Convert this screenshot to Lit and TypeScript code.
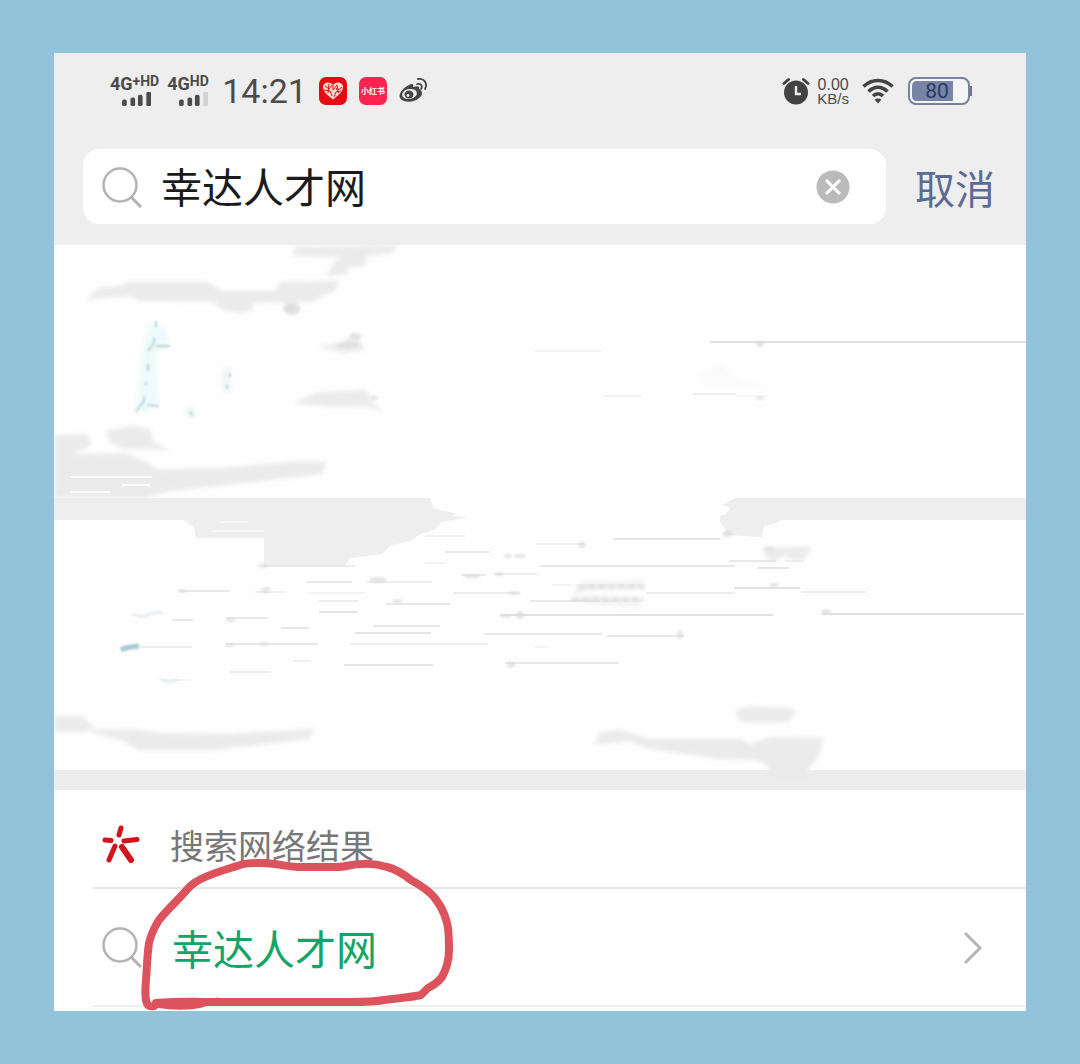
import { LitElement, html, svg, css } from "lit";
import { customElement, property, state } from "lit/decorators.js";

/** Thin streaks left in the erased area: x start, y, x end, opacity. */
const STREAKS: [number, number, number, number][] = [
  [534, 351, 602, 0.3], [604, 396, 642, 0.35], [693, 394, 736, 0.5], [736, 396, 768, 0.2],
  [179, 591, 230, 0.8], [255, 592, 285, 0.5], [306, 582, 352, 0.8], [308, 593, 366, 0.3],
  [318, 601, 358, 0.6], [319, 612, 357, 0.9], [366, 582, 432, 0.6], [386, 604, 450, 0.8],
  [172, 620, 193, 0.7], [226, 618, 268, 0.8], [281, 628, 309, 0.8], [373, 626, 440, 0.8],
  [355, 633, 431, 0.9], [226, 644, 318, 0.8], [350, 644, 488, 0.6], [140, 647, 192, 0.6],
  [293, 661, 311, 0.5], [344, 665, 433, 0.9], [229, 672, 269, 0.6], [162, 680, 191, 0.3],
  [425, 536, 465, 0.4], [445, 552, 490, 0.6], [425, 563, 445, 0.4], [536, 544, 584, 0.5],
  [613, 539, 720, 0.8], [540, 566, 735, 0.8], [462, 575, 486, 0.7], [494, 574, 537, 0.6],
  [453, 593, 520, 0.6], [552, 585, 570, 0.4], [530, 601, 600, 0.7], [646, 593, 735, 0.6],
  [500, 615, 773, 1], [484, 634, 602, 0.7], [607, 636, 684, 0.7], [534, 647, 548, 0.3],
  [505, 663, 618, 0.8], [729, 561, 776, 0.7], [757, 568, 789, 0.8], [734, 588, 800, 1],
  [802, 592, 866, 0.6], [785, 561, 804, 0.5], [264, 566, 355, 0.6],
];

/** Soft specks where streaks began: x, y, x radius, y radius. */
const SPECKS: [number, number, number, number][] = [
  [760, 344, 4, 3], [760, 398, 4, 2], [182, 591, 4, 2], [266, 590, 5, 3], [378, 580, 9, 3],
  [397, 601, 5, 2], [231, 620, 5, 2], [230, 645, 5, 2], [264, 644, 4, 2], [472, 576, 9, 2],
  [499, 574, 4, 2], [508, 556, 4, 2], [520, 556, 6, 2], [582, 545, 4, 3], [514, 593, 6, 2],
  [506, 616, 5, 2], [520, 615, 4, 4], [511, 665, 4, 3], [680, 635, 3, 4], [727, 534, 5, 3],
  [769, 549, 4, 2], [774, 585, 5, 2], [826, 612, 5, 3], [292, 309, 9, 5], [263, 566, 5, 2],
  [356, 336, 6, 3], [348, 345, 12, 3], [374, 398, 4, 2],
];

@customElement("status-bar")
export class StatusBar extends LitElement {
  static styles = css`
    :host { display: flex; justify-content: space-between; align-items: center; height: 32px; color: #4b4b4b; font-family: Roboto, "Liberation Sans", sans-serif; }
    .group { display: flex; align-items: center; }
    .left { gap: 12px; }
    .right { gap: 7px; }
    .carriers { display: flex; gap: 8px; }
    .carrier { display: flex; flex-direction: column; height: 30px; }
    .net { display: flex; align-items: flex-start; font-weight: 700; font-size: 18px; line-height: 16px; }
    .net small { font-size: 14px; line-height: 10px; }
    .bars { margin-left: 11px; }
    .clock { font-size: 34px; line-height: 32px; }
    .rate { display: flex; flex-direction: column; margin-right: 6px; font-family: "Liberation Sans", sans-serif; font-size: 16px; line-height: 15px; text-align: center; }
    .unit { font-size: 15px; line-height: 14px; }
    .apps { display: flex; align-items: center; gap: 12px; }
    .brand { font: 700 8px/8px "Noto Sans CJK SC", sans-serif; }
    svg { display: block; }
  `;

  private carrier(plus: boolean, weak: boolean) {
    return html`<div class="carrier">
      <div class="net">4G<small>${plus ? "+HD" : "HD"}</small></div>
      <svg class="bars" width="32" height="15" viewBox="0 0 32 15" fill="#4b4b4b" aria-hidden="true">
        <rect x="0" y="8" width="5" height="7" rx="2" />
        <rect x="9" y="6" width="5" height="9" rx="2" />
        <rect x="17" y="3" width="5" height="12" rx="2" />
        <rect x="26" y="0" width="5" height="15" rx="1" fill=${weak ? "#d3d3d3" : "#4b4b4b"} />
      </svg>
    </div>`;
  }

  render() {
    return html`
      <div class="group left">
        <div class="carriers">${this.carrier(true, false)}${this.carrier(false, true)}</div>
        <time class="clock">14:21</time>
        <div class="apps">
          <svg width="28" height="28" viewBox="0 0 28 28" aria-hidden="true">
            <rect width="28" height="28" rx="7" fill="#e60a12" />
            <path d="M14 22.500C9 18.500 4 15 4 10c0-5 7-6 10-2 3-4 10-3 10 2 0 5-5 8.500-10 12.500Z" fill="#fbd9d0" />
            <path d="M6 9l4 3 3-4M5 13l6 1 2 5M14 8v5l4-5 1 5 4-3M15 20l2-5 5-1M10 7l-1 9M17 11l3 5" stroke="#e60a12" stroke-width="1" fill="none" />
          </svg>
          <svg width="28" height="28" viewBox="0 0 28 28" aria-hidden="true">
            <rect width="28" height="28" rx="7" fill="#fb2350" />
            <text class="brand" x="14" y="17" text-anchor="middle" fill="#fff">小红书</text>
          </svg>
          <svg width="30" height="28" viewBox="0 0 30 28" fill="none" aria-hidden="true">
            <path d="M10 8C13 6 15 7 14 10c4-1.500 7-1 6 2 4 2 4 6 0 9-5 5-16 5-19 0-2-4 3-10 9-13Z" fill="#454545" />
            <ellipse cx="10.500" cy="17" rx="7.500" ry="5" transform="rotate(-10 10.500 17)" fill="#eee" />
            <ellipse cx="10" cy="17.500" rx="4.500" ry="4" fill="#454545" />
            <circle cx="9" cy="18.500" r="1.400" fill="#eee" />
            <path d="M18 7c4-1 6 2 4 5M19 2c6-1 10 4 7 10" stroke="#454545" stroke-width="1.800" stroke-linecap="round" />
          </svg>
        </div>
      </div>
      <div class="group right">
        <svg width="28" height="28" viewBox="0 0 28 28" fill="none" aria-hidden="true">
          <circle cx="14" cy="15.500" r="12" fill="#434343" />
          <path d="M2 6.500 6.500 2.500M26 6.500 21.500 2.500" stroke="#434343" stroke-width="3" stroke-linecap="round" />
          <path d="M14 9v8h5" stroke="#eee" stroke-width="2.400" />
        </svg>
        <div class="rate"><span>0.00</span><span class="unit">KB/s</span></div>
        <svg width="32" height="26" viewBox="0 0 32 26" fill="none" stroke="#434343" stroke-width="3.600" aria-hidden="true">
          <path d="M1.500 8.500C10 .500 22 .500 30.500 8.500M6.500 13.500c6-5.500 13-5.500 19 0M11 18c3-3 7-3 10 0" />
          <path d="M12.500 21.500c2-1.500 5-1.500 7 0L16 25.500Z" fill="#434343" stroke="none" />
        </svg>
        <svg width="72" height="28" viewBox="-6 0 72 28" role="img" aria-label="80">
          <rect x="2" y="1" width="60" height="26" rx="7" fill="#f4f5f6" stroke="#78839a" stroke-width="2" />
          <path d="M10 4h36v20H10c-3 0-5-2-5-5V9c0-3 2-5 5-5Z" fill="#7684a8" />
          <path d="M64 9v10" stroke="#6f7480" stroke-width="2" />
          <text x="30" y="21" text-anchor="middle" font-size="21" fill="#2d3c5e">80</text>
        </svg>
      </div>
    `;
  }
}

@customElement("search-glyph")
export class SearchGlyph extends LitElement {
  static styles = css`
    :host { display: block; flex: none; }
    svg { display: block; }
  `;
  render() {
    return html`<svg width="42" height="42" viewBox="0 0 42 42" fill="none" stroke="#b3b3b3" stroke-width="2.500" aria-hidden="true">
      <circle cx="18" cy="19" r="16.500" /><path d="M29 31 39 41" stroke-width="3" />
    </svg>`;
  }
}

@customElement("erased-results")
export class ErasedResults extends LitElement {
  static styles = css`
    :host { display: block; }
    svg { display: block; width: 100%; height: auto; }
  `;

  render() {
    return html`<svg viewBox="54 245 972 546" aria-hidden="true">
      <defs>
        <filter id="soft" x="-10%" y="-10%" width="120%" height="120%"><feGaussianBlur stdDeviation="2" /></filter>
        <filter id="speck" x="-5%" y="-5%" width="110%" height="110%"><feGaussianBlur stdDeviation="1" /></filter>
      </defs>
      <rect x="54" y="245" width="972" height="546" fill="#fefefe" />
      <path fill="#eee" d="M54 498H430L433 508 440 510 455 513 452 516 468 517 442 522 434 530 420 534 412 540 390 546 382 554 350 558 345 566H264V538H196L194 527 183 520H54Z" />
      <path fill="#eee" d="M1026 498H735L722 505 730 508 726 514 720 516 720 522 726 530 724 535 762 537 764 526 774 524 782 520H1026Z" />
      <rect x="54" y="770" width="972" height="20" fill="#ededed" />
      <g filter="url(#soft)" fill="#ebebeb">
        <path d="M294 247 398 245 392 253 366 256 366 266 345 268 350 274 326 276 336 260 342 257 294 256Z" />
        <path d="M88 299 92 293 100 288 122 286 126 282H208L222 291H276L280 282 340 281 334 292 322 296 312 302 298 302 296 316 286 314 284 302 254 303 252 310 240 313 220 309 216 302 140 301 130 296 100 298Z" />
        <path d="M318 347 344 342 350 335 358 337 364 350 344 353Z" />
        <path d="M293 403 314 393 366 390 372 402 384 412 366 406 334 407Z" />
        <path d="M54 435 88 434 91 446 72 454 126 453 150 464 155 469 222 468 290 462 326 462 322 474 270 480 170 491 146 498H54Z" />
        <path d="M106 431 130 426 150 429 153 442 170 450 124 449 110 443Z" />
        <path d="M54 716H82L94 727 86 732H54Z" />
        <path d="M94 729 140 730 160 733 230 734 260 732 316 729 308 739 280 742 215 750 138 750 124 741 90 732Z" />
        <path d="M595 744 600 732 620 730 650 739 740 739 750 744 770 737 823 738 820 754 808 770 810 780H768L768 766 756 760 718 759 700 756 650 749 630 741 605 744Z" />
        <path d="M734 711 750 706 790 708 797 712 788 722H742Z" />
        <path d="M762 547H812L804 560H792L784 555 776 561 768 560Z" />
        <path d="M572 597 582 582 646 580 642 587 590 589ZM570 601 590 597 643 599 640 607 600 605Z" fill="#f3f3f3" />
        <path d="M700 372 722 366 740 380 780 390 745 386 702 386Z" fill="#fafafa" />
      </g>
      <g stroke="#fbfbfb" stroke-width="2">
        <path d="M70 477H152M122 485H150M70 492H110" />
        <path d="M220 522H248M212 531H264" stroke="#f6f6f6" />
      </g>
      <g filter="url(#soft)">
        <path d="M150 322 166 328 168 348 155 352 158 402 146 412 136 411 143 350Z" fill="#eefafb" />
        <path d="M222 368h9v24h-9ZM184 410l8-4 5 9-8 4Z" fill="#edf7f7" />
      </g>
      <g filter="url(#speck)" stroke="#b9d3d7" stroke-width="2" fill="none">
        <path d="M156 321v6M154 338v5l-6 8M156 346h14M148 364v7M146 382v3M144 396v5l-8 11M147 405l12 1M230 373v4M227 385v4M190 411l2 5" />
        <path d="M132 614l10 3 8-3 9-2 3 1M160 679l8 3 10-2" opacity=".5" />
        <path d="M121 650c5-3 11-3 18-4" stroke="#a3c9d3" stroke-width="5" />
      </g>
      <g stroke="#e1e1e1" stroke-width="2">
        ${STREAKS.map(([x1, y, x2, o]) => svg`<path d=${`M${x1} ${y}H${x2}`} opacity=${o} />`)}
      </g>
      <path d="M710 342H1026M822 614H1024" stroke="#dfdfdf" stroke-width="2" />
      <g fill="#d9d9d9" filter="url(#speck)">
        ${SPECKS.map(([x, y, rx, ry]) => svg`<ellipse cx=${x} cy=${y} rx=${rx} ry=${ry} opacity=".65" />`)}
      </g>
      <path d="M578 586H644M572 600H644" stroke="#dadada" stroke-width="5" stroke-dasharray="7 3" filter="url(#soft)" />
      <path d="M75 744v5" stroke="#b26c6c" stroke-width="3" filter="url(#speck)" />
    </svg>`;
  }
}

@customElement("web-results")
export class WebResults extends LitElement {
  @property() query = "";

  static styles = css`
    :host { display: block; position: relative; font-family: "Noto Sans CJK SC", sans-serif; background: #fefefe; padding-bottom: 4px; }
    .row { display: flex; align-items: center; margin-left: 39px; padding: 0 43px 0 9px; border-bottom: 2px solid #e6e6e6; }
    .heading { height: 96px; color: #777; }
    h2 { margin: 0; padding-top: 12px; font-size: 34px; line-height: 48px; font-weight: 400; }
    .mark { width: 38px; flex: none; margin: 10px 30px 0 0; display: block; }
    .result { height: 116px; color: #13a566; text-decoration: none; font-size: 41px; line-height: 56px; border-bottom-color: #f0f0f0; }
    .result span { flex: 1; margin-left: 28px; }
    .arrow { display: block; flex: none; }
    .circle { position: absolute; left: 86px; top: 66px; pointer-events: none; }
  `;

  render() {
    return html`
      <div class="row heading">
        <svg class="mark" width="38" height="38" viewBox="0 0 38 38" fill="none" stroke="#d3141c" stroke-linecap="round" aria-hidden="true">
          <path d="M19 3 17 10" stroke-width="5" /><path d="M3 15 9 15.500" stroke-width="5" />
          <path d="M22 16 35 14.500" stroke-width="5" /><path d="M13 21 7 35" stroke-width="5" /><path d="M20 22 29 35" stroke-width="6" />
        </svg>
        <h2>搜索网络结果</h2>
      </div>
      <a class="row result" href="#result">
        <search-glyph></search-glyph>
        <span>${this.query}</span>
        <svg class="arrow" width="20" height="34" viewBox="0 0 20 34" fill="none" stroke="#b5b5b5" stroke-width="3" aria-hidden="true"><path d="M2 3 17 18 2 33" /></svg>
      </a>
      <svg class="circle" width="316" height="154" viewBox="140 857 316 154" fill="none" stroke="#dd535d" stroke-width="8" stroke-linecap="round" stroke-linejoin="round" aria-hidden="true">
        <path d="M156 1003C180 1001 200 1002 217 1002H351C365 1002 374 1002 384 1000C400 998 412 997 421 995L428 988C434 985 439 981 442 977C448 966 449 958 449 950C449 938 449 930 447 923C444 911 440 905 434 897C428 890 420 885 411 880C402 873 396 869 387 867C378 864 370 863 361 864C352 864 346 867 337 867H297C282 866 275 863 261 863C250 863 245 863 237 866C224 870 213 873 201 879C193 883 190 886 184 893C175 903 167 910 159 920C154 928 151 934 149 943C147 956 147 968 146 980C145 990 145 994 146 1000C147 1006 150 1007 154 1006" />
        <path d="M156 1005C174 1008 188 1008 202 1005L217 1000" stroke-width="5" />
      </svg>
    `;
  }
}

@customElement("app-root")
export class AppRoot extends LitElement {
  @state() private query = "幸达人才网";

  static styles = css`
    :host { display: block; box-sizing: border-box; min-height: 100vh; padding: 53px 54px; background: #92c3db; font-family: "Noto Sans CJK SC", sans-serif; }
    main { background: #fefefe; overflow: hidden; }
    header { background: #eee; padding: 22px 31px 21px 29px; }
    status-bar { margin: 0 22px 0 27px; }
    form { display: flex; align-items: center; gap: 29px; margin-top: 42px; }
    .box { flex: 1; min-width: 0; display: flex; align-items: center; height: 75px; padding: 0 36px 0 19px; gap: 17px; background: #fefefe; border-radius: 16px; }
    input { flex: 1; min-width: 0; height: 60px; padding: 0 0 4px; border: 0; outline: 0; background: none; color: #1b1b1b; font: 400 41px/56px "Noto Sans CJK SC", sans-serif; }
    button { flex: none; padding: 0; border: 0; background: none; color: #5b6b95; font: 400 40px/60px "Noto Sans CJK SC", sans-serif; }
    .clear svg { display: block; }
  `;

  private onInput(e: Event) {
    this.query = (e.target as HTMLInputElement).value;
  }

  render() {
    return html`
      <main>
        <header>
          <status-bar></status-bar>
          <form @submit=${(e: Event) => e.preventDefault()}>
            <div class="box">
              <search-glyph></search-glyph>
              <input type="text" aria-label="搜索" .value=${this.query} @input=${this.onInput} />
              <button class="clear" type="button" aria-label="清除" @click=${() => (this.query = "")}>
                <svg width="34" height="34" viewBox="0 0 34 34" fill="none"><circle cx="17" cy="17" r="16.500" fill="#bababa" /><path d="M10 10 24 24M24 10 10 24" stroke="#fff" stroke-width="3" /></svg>
              </button>
            </div>
            <button type="button">取消</button>
          </form>
        </header>
        <erased-results></erased-results>
        <web-results .query=${this.query}></web-results>
      </main>
    `;
  }
}
